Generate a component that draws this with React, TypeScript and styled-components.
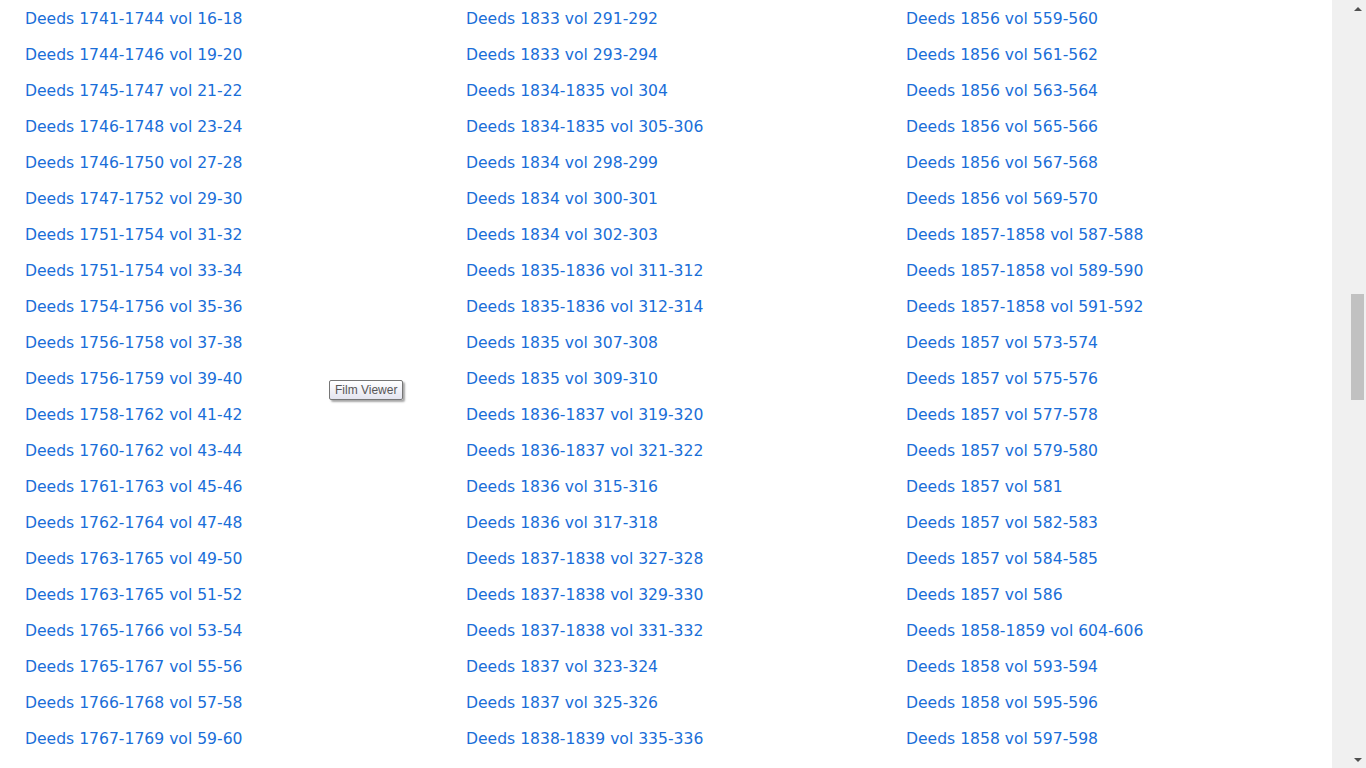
import React from 'react'
import styled, { createGlobalStyle } from 'styled-components'

const GlobalStyle = createGlobalStyle`
  html, body {
    margin: 0;
    padding: 0;
    height: 100%;
    overflow: hidden;
    background: #ffffff;
  }
`

const col1 = [
  'Deeds 1741-1744 vol 16-18',
  'Deeds 1744-1746 vol 19-20',
  'Deeds 1745-1747 vol 21-22',
  'Deeds 1746-1748 vol 23-24',
  'Deeds 1746-1750 vol 27-28',
  'Deeds 1747-1752 vol 29-30',
  'Deeds 1751-1754 vol 31-32',
  'Deeds 1751-1754 vol 33-34',
  'Deeds 1754-1756 vol 35-36',
  'Deeds 1756-1758 vol 37-38',
  'Deeds 1756-1759 vol 39-40',
  'Deeds 1758-1762 vol 41-42',
  'Deeds 1760-1762 vol 43-44',
  'Deeds 1761-1763 vol 45-46',
  'Deeds 1762-1764 vol 47-48',
  'Deeds 1763-1765 vol 49-50',
  'Deeds 1763-1765 vol 51-52',
  'Deeds 1765-1766 vol 53-54',
  'Deeds 1765-1767 vol 55-56',
  'Deeds 1766-1768 vol 57-58',
  'Deeds 1767-1769 vol 59-60',
]

const col2 = [
  'Deeds 1833 vol 291-292',
  'Deeds 1833 vol 293-294',
  'Deeds 1834-1835 vol 304',
  'Deeds 1834-1835 vol 305-306',
  'Deeds 1834 vol 298-299',
  'Deeds 1834 vol 300-301',
  'Deeds 1834 vol 302-303',
  'Deeds 1835-1836 vol 311-312',
  'Deeds 1835-1836 vol 312-314',
  'Deeds 1835 vol 307-308',
  'Deeds 1835 vol 309-310',
  'Deeds 1836-1837 vol 319-320',
  'Deeds 1836-1837 vol 321-322',
  'Deeds 1836 vol 315-316',
  'Deeds 1836 vol 317-318',
  'Deeds 1837-1838 vol 327-328',
  'Deeds 1837-1838 vol 329-330',
  'Deeds 1837-1838 vol 331-332',
  'Deeds 1837 vol 323-324',
  'Deeds 1837 vol 325-326',
  'Deeds 1838-1839 vol 335-336',
]

const col3 = [
  'Deeds 1856 vol 559-560',
  'Deeds 1856 vol 561-562',
  'Deeds 1856 vol 563-564',
  'Deeds 1856 vol 565-566',
  'Deeds 1856 vol 567-568',
  'Deeds 1856 vol 569-570',
  'Deeds 1857-1858 vol 587-588',
  'Deeds 1857-1858 vol 589-590',
  'Deeds 1857-1858 vol 591-592',
  'Deeds 1857 vol 573-574',
  'Deeds 1857 vol 575-576',
  'Deeds 1857 vol 577-578',
  'Deeds 1857 vol 579-580',
  'Deeds 1857 vol 581',
  'Deeds 1857 vol 582-583',
  'Deeds 1857 vol 584-585',
  'Deeds 1857 vol 586',
  'Deeds 1858-1859 vol 604-606',
  'Deeds 1858 vol 593-594',
  'Deeds 1858 vol 595-596',
  'Deeds 1858 vol 597-598',
]

const App = () => {
  return (
    <>
      <GlobalStyle />
      <Page>
        <Content>
          <Columns>
            {[col1, col2, col3].map((list, ci) => (
              <Column key={ci}>
                {list.map((item) => (
                  <FilmLink href="#" key={item}>{item}</FilmLink>
                ))}
              </Column>
            ))}
          </Columns>
          <Tooltip>Film Viewer</Tooltip>
        </Content>
        <Scrollbar>
          <Arrow />
          <Track>
            <Thumb />
          </Track>
          <Arrow $down />
        </Scrollbar>
      </Page>
    </>
  )
}

const Page = styled.div`
  display: flex;
  width: 1366px;
  height: 768px;
  overflow: hidden;
`

const Content = styled.div`
  position: relative;
  flex: 1;
  background: #ffffff;
`

const Columns = styled.div`
  display: grid;
  grid-template-columns: 441px 440px 1fr;
  padding: 1px 0 0 25px;
`

const Column = styled.div`
  display: flex;
  flex-direction: column;
`

const FilmLink = styled.a`
  display: block;
  height: 36px;
  line-height: 36px;
  font-family: "DejaVu Sans", Verdana, sans-serif;
  font-size: 15.6px;
  color: #1a6ed8;
  text-decoration: none;
  white-space: nowrap;
`

const Tooltip = styled.div`
  position: absolute;
  left: 329px;
  top: 380px;
  height: 18px;
  padding: 0 5px;
  border: 1px solid #767676;
  border-radius: 2px;
  background: linear-gradient(#ffffff, #e4e5f0);
  box-shadow: 2px 2px 2px rgba(0, 0, 0, 0.35);
  font-family: "Liberation Sans", Arial, sans-serif;
  font-size: 12px;
  line-height: 18px;
  color: #575757;
  white-space: nowrap;
`

const Scrollbar = styled.div`
  width: 34px;
  background: #f0f0f0;
  display: flex;
  flex-direction: column;
  align-items: flex-end;
  padding-right: 2px;
  box-sizing: border-box;
`

const Arrow = styled.div<{ $down?: boolean }>`
  width: 13px;
  height: 17px;
  display: flex;
  align-items: center;
  justify-content: center;
  &::after {
    content: '';
    width: 0;
    height: 0;
    border-left: 4px solid transparent;
    border-right: 4px solid transparent;
    ${(p) => (p.$down ? 'border-top: 4px solid #505050;' : 'border-bottom: 4px solid #505050;')}
  }
`

const Track = styled.div`
  flex: 1;
  width: 13px;
  padding-top: 277px;
`

const Thumb = styled.div`
  width: 13px;
  height: 106px;
  background: #c1c1c1;
`

export default App
